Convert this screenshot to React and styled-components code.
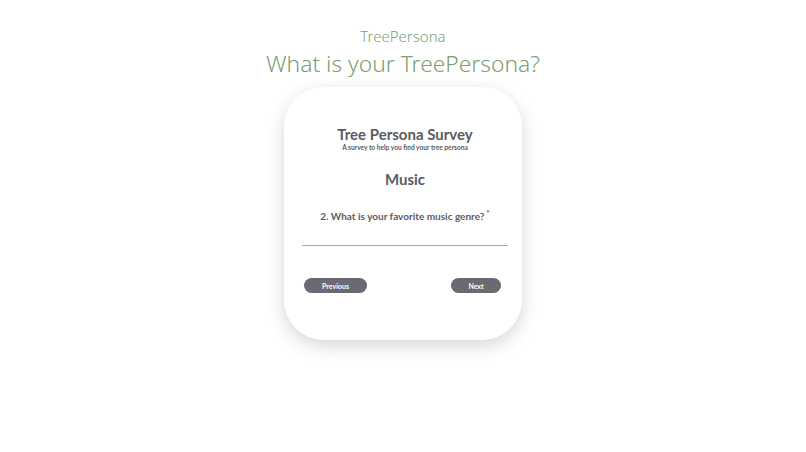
import React from "react";
import styled, { createGlobalStyle } from "styled-components";

const GlobalStyle = createGlobalStyle`
  body {
    margin: 0;
    background: #ffffff;
    font-family: "Lato", "Noto Sans", sans-serif;
  }
`;

const Page = styled.main`
  display: flex;
  flex-direction: column;
  align-items: center;
  padding-top: 26px;
  height: 452px;
  box-sizing: border-box;
`;

const Brand = styled.div`
  font-family: "Noto Sans", "Liberation Sans", sans-serif;
  font-weight: 300;
  font-size: 15px;
  line-height: 20px;
  color: #7d9f72;
`;

const Headline = styled.h1`
  margin: 2px 0 0;
  font-family: "Noto Sans", "Liberation Sans", sans-serif;
  font-weight: 300;
  font-size: 22.8px;
  line-height: 32px;
  color: #7d9f72;
`;

const Card = styled.section`
  margin-top: 7px;
  width: 238px;
  height: 253px;
  box-sizing: border-box;
  border-radius: 40px;
  background: #fff;
  box-shadow: 0 6px 18px rgba(0, 0, 0, 0.16);
  display: flex;
  flex-direction: column;
  align-items: center;
  padding: 38px 14px 0 18px;
  color: #5c5b63;
`;

const Title = styled.h2`
  margin: 0;
  font-size: 15px;
  font-weight: 700;
  line-height: 18px;
`;

const Subtitle = styled.p`
  margin: 0;
  font-size: 6.6px;
  font-weight: 700;
  line-height: 8px;
`;

const Section = styled.h3`
  margin: 19px 0 0;
  font-size: 15px;
  font-weight: 700;
  line-height: 18px;
`;

const Question = styled.label`
  margin-top: 19px;
  font-size: 10px;
  font-weight: 700;
  line-height: 12px;

  sup {
    font-size: 8px;
    margin-left: 2px;
  }
`;

const Input = styled.input`
  margin-top: 11px;
  width: 100%;
  border: none;
  border-bottom: 1px solid #a9a9ad;
  outline: none;
  background: transparent;
  height: 12px;
  padding: 0;
`;

const Actions = styled.div`
  width: 100%;
  display: flex;
  justify-content: space-between;
  margin-top: 32px;
  padding: 0 7px 0 2px;
  box-sizing: border-box;
`;

const Button = styled.button`
  width: ${(p) => p.$w}px;
  height: 15px;
  border: none;
  border-radius: 8px;
  background: #6b6a72;
  color: #fff;
  font-family: "Lato", sans-serif;
  font-size: 7px;
  font-weight: 700;
  padding: 0;
  cursor: pointer;
`;

export default function App() {
  return (
    <>
      <GlobalStyle />
      <Page>
        <Brand>TreePersona</Brand>
        <Headline>What is your TreePersona?</Headline>
        <Card>
          <Title>Tree Persona Survey</Title>
          <Subtitle>A survey to help you find your tree persona</Subtitle>
          <Section>Music</Section>
          <Question>
            2. What is your favorite music genre?<sup>*</sup>
          </Question>
          <Input type="text" />
          <Actions>
            <Button $w={63}>Previous</Button>
            <Button $w={50}>Next</Button>
          </Actions>
        </Card>
      </Page>
    </>
  );
}
